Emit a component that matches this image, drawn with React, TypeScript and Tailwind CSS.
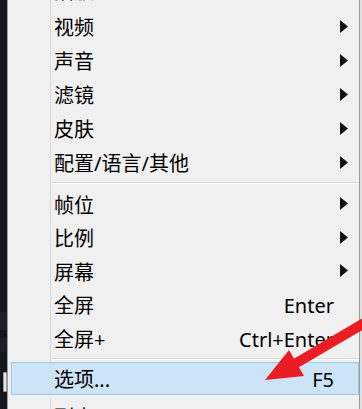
import React from 'react';

type Item = { label: string; sub?: boolean; key?: string };

const groupOne: Item[] = [
  { label: '视频', sub: true },
  { label: '声音', sub: true },
  { label: '滤镜', sub: true },
  { label: '皮肤', sub: true },
  { label: '配置/语言/其他', sub: true },
];

const groupTwo: Item[] = [
  { label: '帧位', sub: true },
  { label: '比例', sub: true },
  { label: '屏幕', sub: true },
  { label: '全屏', key: 'Enter' },
  { label: '全屏+', key: 'Ctrl+Enter' },
];

const SubArrow = () => (
  <svg width="8" height="13" viewBox="0 0 8 13" className="ml-[6px] block">
    <path d="M0 0 L8 6.5 L0 13 Z" fill="#111" />
  </svg>
);

const Row: React.FC<{ item: Item; h: string }> = ({ item, h }) => (
  <div className={`flex ${h}`}>
    <div className="w-[43px] shrink-0 border-r border-[#d9d9d9]" />
    <div className="flex flex-1 items-center pl-[3px]">
      <span className="flex-1 whitespace-nowrap pt-[4px]">{item.label}</span>
      {item.key && <span className="whitespace-nowrap pt-[4px]">{item.key}</span>}
      <div className="w-[25px] shrink-0">{item.sub && <SubArrow />}</div>
    </div>
  </div>
);

const Separator: React.FC<{ h: string }> = ({ h }) => (
  <div className={`flex ${h}`}>
    <div className="w-[43px] shrink-0 border-r border-[#d9d9d9]" />
    <div className="flex-1 pt-[3px]">
      <div className="h-px bg-[#d7d7d7]" />
      <div className="h-px bg-white" />
    </div>
  </div>
);

const Strip = () => (
  <div className="flex w-[7px] shrink-0 flex-col bg-[#15161b]">
    <div className="h-[312px]" />
    <div className="h-[18px] bg-[#1f212a]" />
    <div className="h-[8px]" />
    <div className="h-[14px] bg-[#1b1d24]" />
    <div className="h-[20px]" />
    <div className="ml-[3px] h-[20px] w-[4px] rounded-[1px] border border-[#9a9a9a] bg-[#e6e6e6]" />
  </div>
);

export default function App() {
  return (
    <div
      className="relative flex h-[409px] w-[362px] overflow-hidden bg-[#f0f0f0] text-[20px] leading-none text-black"
      style={{ fontFamily: '"Noto Sans", "Noto Sans CJK SC", sans-serif' }}
    >
      <Strip />
      <div className="w-[353px] shrink-0 border-x border-[#9a9a9a] bg-[#f0f0f0]">
        <div className="-mt-[29px]">
          <Row item={{ label: '播放', sub: true }} h="h-[38px]" />
          {groupOne.map((it) => (
            <Row key={it.label} item={it} h="h-[34px]" />
          ))}
          <Separator h="h-[8px]" />
          {groupTwo.map((it) => (
            <Row key={it.label} item={it} h="h-[33.5px]" />
          ))}
          <Separator h="h-[7.5px]" />
          <div className="ml-[3px] flex h-[33px] border border-[#99c9ef] bg-[#cde4f7]">
            <div className="w-[39px] shrink-0" />
            <div className="flex flex-1 items-center pl-[3px]">
              <span className="flex-1 whitespace-nowrap pt-[3px]">选项...</span>
              <span className="whitespace-nowrap pt-[3px]">F5</span>
              <div className="w-[24px] shrink-0" />
            </div>
          </div>
          <div className="mt-[4px]">
            <Row item={{ label: '列表', key: 'F6' }} h="h-[34px]" />
          </div>
        </div>
      </div>
      <div className="w-[2px] shrink-0 bg-[#dedede]" />

      <svg
        className="pointer-events-none absolute left-0 top-0"
        width="362"
        height="409"
        viewBox="0 0 362 409"
      >
        <line x1="293" y1="365" x2="378" y2="315" stroke="#ea1c24" strokeWidth="10" />
        <polygon points="265,380 289,350 304,376" fill="#ea1c24" />
      </svg>
    </div>
  );
}
